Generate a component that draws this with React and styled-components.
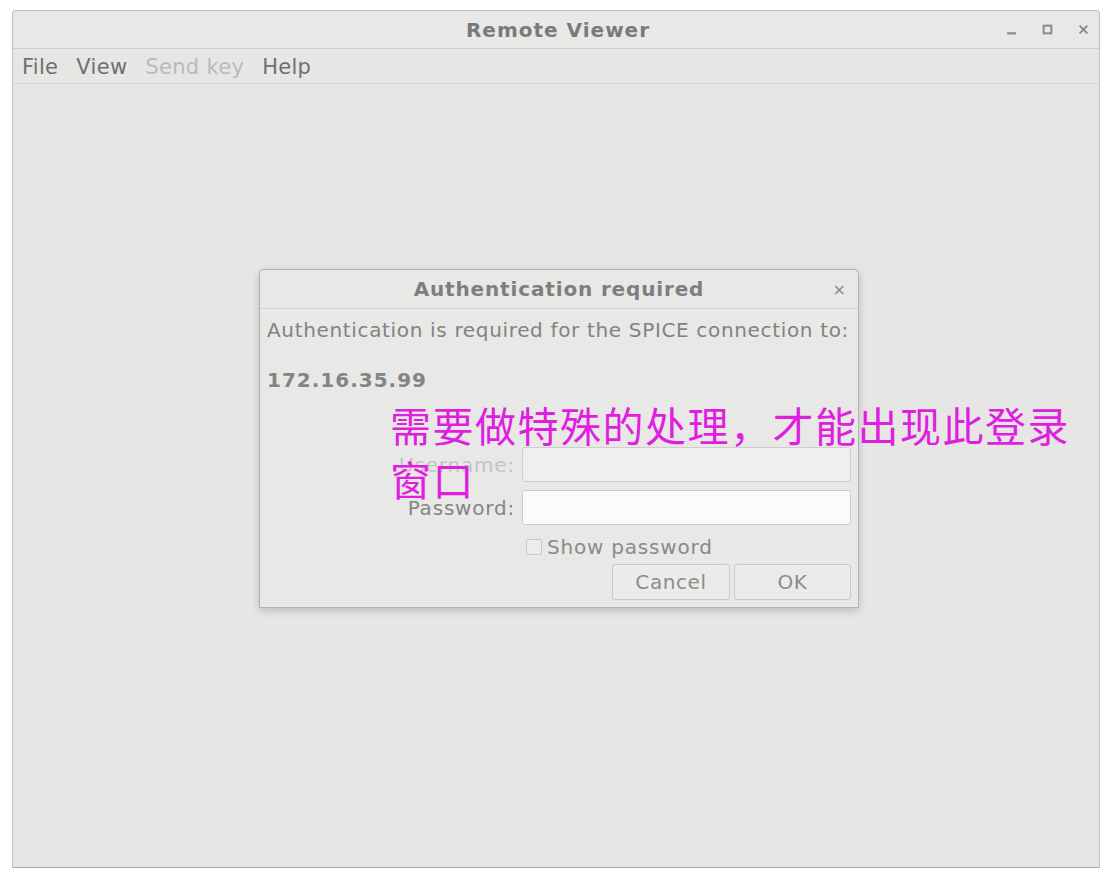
import React from 'react';
import styled, { createGlobalStyle } from 'styled-components';

const GlobalStyle = createGlobalStyle`
  body {
    margin: 0;
    background: #ffffff;
    font-family: "DejaVu Sans", "Liberation Sans", sans-serif;
  }
`;

const Page = styled.div`
  width: 1110px;
  height: 882px;
  padding: 10px 10px 0 12px;
  box-sizing: border-box;
  overflow: hidden;
`;

const Window = styled.div`
  position: relative;
  width: 1088px;
  height: 858px;
  box-sizing: border-box;
  border: 1px solid #bdbdbd;
  border-bottom-color: #a9a9a9;
  border-radius: 4px 4px 0 0;
  background: #e6e6e5;
  display: flex;
  flex-direction: column;
`;

const TitleBar = styled.div`
  height: 37px;
  flex: none;
  display: grid;
  grid-template-columns: 1fr auto 1fr;
  align-items: center;
  background: #e8e8e7;
  border-bottom: 1px solid #d0d0cf;
  border-radius: 4px 4px 0 0;
`;

const WindowTitle = styled.div`
  grid-column: 2;
  font-size: 20px;
  font-weight: bold;
  letter-spacing: 1px;
  color: #7a7a7a;
  padding-left: 4px;
`;

const Controls = styled.div`
  grid-column: 3;
  justify-self: end;
  display: flex;
  align-items: center;
  gap: 22px;
  padding-right: 9px;
  color: #8a8a8a;
`;

const Ctl = styled.span`
  width: 14px;
  display: flex;
  justify-content: center;
  align-items: center;
`;

const MenuBar = styled.div`
  height: 35px;
  flex: none;
  display: flex;
  align-items: center;
  gap: 18px;
  padding-left: 9px;
  padding-top: 2px;
  box-sizing: border-box;
  border-bottom: 1px solid #d6d6d5;
`;

const MenuItem = styled.span`
  font-size: 21px;
  letter-spacing: 0.3px;
  color: ${p => (p.disabled ? '#bababa' : '#707070')};
`;

const Content = styled.div`
  flex: 1;
  display: flex;
  align-items: flex-start;
  padding: 185px 0 0 246px;
`;

const Dialog = styled.div`
  width: 600px;
  height: 339px;
  box-sizing: border-box;
  border: 1px solid #b2b2b2;
  border-radius: 5px 5px 0 0;
  background: #e8e8e7;
  box-shadow: 0 3px 9px rgba(0, 0, 0, 0.18);
  display: flex;
  flex-direction: column;
`;

const DialogHeader = styled.div`
  height: 38px;
  flex: none;
  display: grid;
  grid-template-columns: 1fr auto 1fr;
  align-items: center;
  border-bottom: 1px solid #d0d0cf;
`;

const DialogTitle = styled.div`
  grid-column: 2;
  font-size: 20px;
  font-weight: bold;
  letter-spacing: 0.85px;
  color: #7e7e7e;
`;

const CloseX = styled.span`
  grid-column: 3;
  justify-self: end;
  padding-right: 12px;
  color: #8a8a8a;
  font-size: 16px;
`;

const DialogBody = styled.div`
  display: flex;
  flex-direction: column;
  padding: 10px 7px 0 7px;
`;

const Message = styled.div`
  font-size: 20px;
  letter-spacing: 0.66px;
  color: #828282;
  line-height: 22px;
  white-space: nowrap;
`;

const Address = styled.div`
  font-size: 20px;
  font-weight: bold;
  letter-spacing: 1px;
  color: #848484;
  line-height: 22px;
  margin-top: 28px;
`;

const Form = styled.div`
  display: grid;
  grid-template-columns: 248px 329px;
  column-gap: 7px;
  row-gap: 8px;
  align-items: center;
  margin-top: 56px;
`;

const Label = styled.label`
  justify-self: end;
  font-size: 20px;
  letter-spacing: 0.8px;
  color: ${p => (p.disabled ? '#c4c4c4' : '#858585')};
`;

const Input = styled.div`
  height: 35px;
  box-sizing: border-box;
  border: 1px solid #cdcdcd;
  border-radius: 3px;
  background: ${p => (p.disabled ? '#efefee' : '#fbfbfb')};
`;

const CheckRow = styled.div`
  grid-column: 2;
  display: flex;
  align-items: center;
  gap: 5px;
  margin-top: 2px;
  margin-left: 4px;
  font-size: 20px;
  letter-spacing: 0.8px;
  color: #8a8a8a;
`;

const CheckBox = styled.span`
  width: 16px;
  height: 16px;
  box-sizing: border-box;
  border: 1px solid #c8c8c8;
  border-radius: 2px;
  background: #ececeb;
`;

const Buttons = styled.div`
  grid-column: 2;
  display: flex;
  justify-content: flex-end;
  gap: 4px;
  margin-top: -3px;
`;

const Button = styled.div`
  height: 36px;
  box-sizing: border-box;
  border: 1px solid #cacaca;
  border-radius: 3px;
  background: #ebebea;
  display: flex;
  align-items: center;
  justify-content: center;
  font-size: 20px;
  letter-spacing: 0.6px;
  color: #8c8c8c;
  width: ${p => p.w}px;
`;

const Annotation = styled.div`
  position: absolute;
  left: 377px;
  top: 386px;
  width: 700px;
  font-family: "Noto Sans CJK SC", sans-serif;
  font-weight: 400;
  font-size: 41px;
  line-height: 54px;
  letter-spacing: 1.5px;
  color: #e01ee0;
`;

export default function App() {
  return (
    <Page>
      <GlobalStyle />
      <Window>
        <TitleBar>
          <WindowTitle>Remote Viewer</WindowTitle>
          <Controls>
            <Ctl>
              <svg width="11" height="11" viewBox="0 0 10 10">
                <rect x="1" y="7.5" width="8" height="2" fill="#8a8a8a" />
              </svg>
            </Ctl>
            <Ctl>
              <svg width="11" height="11" viewBox="0 0 10 10">
                <rect x="1.5" y="1.5" width="7" height="7" fill="none" stroke="#8a8a8a" strokeWidth="1.8" />
              </svg>
            </Ctl>
            <Ctl>
              <svg width="11" height="11" viewBox="0 0 10 10">
                <path d="M1.5 1.5 L8.5 8.5 M8.5 1.5 L1.5 8.5" stroke="#8a8a8a" strokeWidth="1.8" />
              </svg>
            </Ctl>
          </Controls>
        </TitleBar>
        <MenuBar>
          <MenuItem>File</MenuItem>
          <MenuItem>View</MenuItem>
          <MenuItem disabled>Send key</MenuItem>
          <MenuItem>Help</MenuItem>
        </MenuBar>
        <Content>
          <Dialog>
            <DialogHeader>
              <DialogTitle>Authentication required</DialogTitle>
              <CloseX>×</CloseX>
            </DialogHeader>
            <DialogBody>
              <Message>Authentication is required for the SPICE connection to:</Message>
              <Address>172.16.35.99</Address>
              <Form>
                <Label disabled>Username:</Label>
                <Input disabled />
                <Label>Password:</Label>
                <Input />
                <CheckRow>
                  <CheckBox />
                  <span>Show password</span>
                </CheckRow>
                <Buttons>
                  <Button w={118}>Cancel</Button>
                  <Button w={117}>OK</Button>
                </Buttons>
              </Form>
            </DialogBody>
          </Dialog>
        </Content>
        <Annotation>需要做特殊的处理，才能出现此登录窗口</Annotation>
      </Window>
    </Page>
  );
}
